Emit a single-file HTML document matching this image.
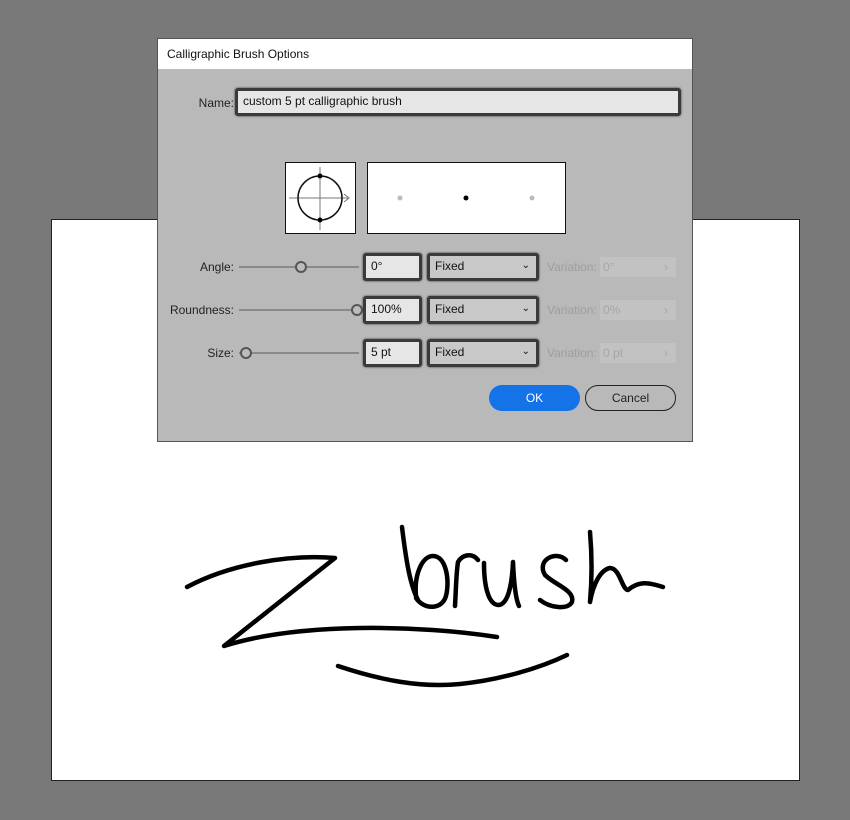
<!DOCTYPE html><html><head><style>
body{margin:0;width:850px;height:820px;background:#797979;position:relative;overflow:hidden;font-family:"Liberation Sans",sans-serif;}
.art{position:absolute;left:51px;top:219px;width:747px;height:560px;background:#fff;border:1px solid #222;}
.dlg{position:absolute;left:157px;top:38px;width:534px;height:402px;background:#b9b9b9;border:1px solid #555;}
.title{height:30px;background:#fff;font-size:12px;line-height:30px;padding-left:9px;color:#111;}
.lbl{position:absolute;font-size:12px;color:#222;text-align:right;}
.inp{position:absolute;background:#e6e6e6;border:3px solid #3a3a3a;border-radius:3px;box-shadow:0 0 2px #333;font-size:12px;color:#111;box-sizing:border-box;line-height:20px;padding-left:5px;}
.sel{background:#c8c8c8;}
.dis{position:absolute;font-size:12px;color:#9e9e9e;}
.dbox{position:absolute;background:#c2c2c2;width:76px;height:20px;font-size:12px;color:#a6a6a6;line-height:20px;padding-left:3px;box-sizing:border-box;}
.track{position:absolute;height:2px;background:#8a8a8a;}
.knob{position:absolute;width:8px;height:8px;border:2px solid #555;border-radius:50%;background:#bbb;}
</style></head><body>
<div class="art"></div>
<div class="dlg">
<div class="title">Calligraphic Brush Options</div>
<div class="lbl" style="left:40px;top:57px;width:36px">Name:</div>
<div class="inp" style="left:77px;top:49px;width:446px;height:28px;line-height:21px">custom 5 pt calligraphic brush</div>
<div style="position:absolute;left:127px;top:123px;width:69px;height:70px;background:#fff;border:1px solid #111">
<svg width="69" height="70"><line x1="3" y1="35" x2="62" y2="35" stroke="#777"/><path d="M58 31L63 35L58 39" fill="none" stroke="#777"/><line x1="34" y1="4" x2="34" y2="67" stroke="#777"/><circle cx="34" cy="35" r="22" fill="none" stroke="#111" stroke-width="1.5"/><circle cx="34" cy="13" r="2.5"/><circle cx="34" cy="57" r="2.5"/></svg></div>
<div style="position:absolute;left:209px;top:123px;width:197px;height:70px;background:#fff;border:1px solid #111">
<svg width="197" height="70"><circle cx="32" cy="35" r="2.5" fill="#bbb"/><circle cx="98" cy="35" r="2.5"/><circle cx="164" cy="35" r="2.5" fill="#bbb"/></svg></div>

<div class="lbl" style="left:20px;top:221px;width:56px">Angle:</div>
<div class="track" style="left:81px;top:227px;width:120px"></div>
<div class="knob" style="left:137px;top:222px"></div>
<div class="inp" style="left:205px;top:214px;width:59px;height:28px">0°</div>
<div class="inp sel" style="left:269px;top:214px;width:112px;height:28px">Fixed<span style="position:absolute;right:6px;font-size:10px">&#8964;</span></div>
<div class="dis" style="left:389px;top:221px">Variation:</div>
<div class="dbox" style="left:442px;top:218px">0°<span style="position:absolute;right:8px">›</span></div>

<div class="lbl" style="left:0px;top:264px;width:76px">Roundness:</div>
<div class="track" style="left:81px;top:270px;width:120px"></div>
<div class="knob" style="left:193px;top:265px"></div>
<div class="inp" style="left:205px;top:257px;width:59px;height:28px">100%</div>
<div class="inp sel" style="left:269px;top:257px;width:112px;height:28px">Fixed<span style="position:absolute;right:6px;font-size:10px">&#8964;</span></div>
<div class="dis" style="left:389px;top:264px">Variation:</div>
<div class="dbox" style="left:442px;top:261px">0%<span style="position:absolute;right:8px">›</span></div>

<div class="lbl" style="left:20px;top:307px;width:56px">Size:</div>
<div class="track" style="left:81px;top:313px;width:120px"></div>
<div class="knob" style="left:82px;top:308px"></div>
<div class="inp" style="left:205px;top:300px;width:59px;height:28px">5 pt</div>
<div class="inp sel" style="left:269px;top:300px;width:112px;height:28px">Fixed<span style="position:absolute;right:6px;font-size:10px">&#8964;</span></div>
<div class="dis" style="left:389px;top:307px">Variation:</div>
<div class="dbox" style="left:442px;top:304px">0 pt<span style="position:absolute;right:8px">›</span></div>

<div style="position:absolute;left:331px;top:346px;width:91px;height:26px;border-radius:13px;background:#1473e6;color:#fff;font-size:12px;text-align:center;line-height:26px">OK</div>
<div style="position:absolute;left:427px;top:346px;width:89px;height:24px;border-radius:13px;border:1.5px solid #222;color:#222;font-size:12px;text-align:center;line-height:24px">Cancel</div>
</div>
<svg style="position:absolute;left:0;top:0" width="850" height="820" fill="none" stroke="#000" stroke-width="4.5" stroke-linecap="round" stroke-linejoin="round">
<path d="M187 587C230 564 290 554 335 558L224 646C300 622 420 625 497 637"/>
<path d="M338 666C380 680 420 688 460 684C500 680 540 668 567 655"/>
<path d="M402 527C406 560 410 585 418 600M416 596C414 575 422 556 433 556C446 556 450 580 446 596C442 610 424 610 416 598"/>
<path d="M455 606C456 590 456 575 458 562C462 555 472 552 478 560"/>
<path d="M484 563C484 585 488 604 498 605C508 605 512 585 513 562C514 585 516 600 519 606"/>
<path d="M566 560C556 550 536 560 545 575C555 585 575 590 572 602C568 610 550 608 540 600"/>
<path d="M590 532C592 555 592 580 590 602C593 585 600 570 610 568C620 568 622 590 628 590C640 580 650 583 663 587"/>
</svg>
</body></html>
